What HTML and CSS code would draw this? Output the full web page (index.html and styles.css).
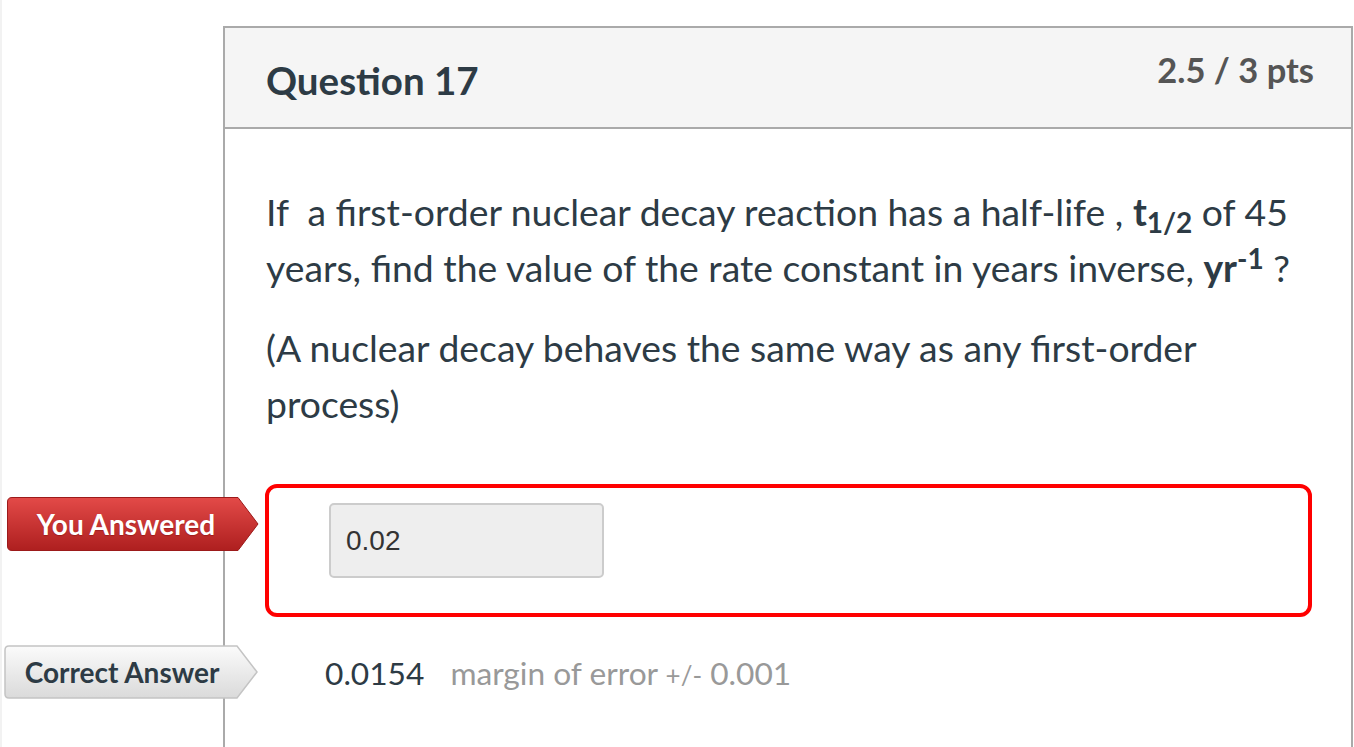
FILE: index.html
```html
<!DOCTYPE html>
<html lang="en">
<head>
<meta charset="utf-8">
<title>Question 17</title>
<link rel="stylesheet" href="styles.css">
</head>
<body>
<div class="page">
  <div class="question">
    <div class="q-header">
      <h2 class="q-title">Question 17</h2>
      <div class="q-points">2.5 / 3 pts</div>
    </div>
    <div class="q-body">
      <div class="q-text">
        <p class="p1">If&nbsp; a first-order nuclear decay reaction has a half-life , <strong>t<sub>1/2</sub></strong> of 45 years, find the value of the rate constant in years inverse, <strong>yr<sup>-1</sup></strong> ?</p>
        <p class="p2">(A nuclear decay behaves the same way as any first-order process)</p>
      </div>
      <div class="answers">
        <div class="answer-box">
          <div class="tag tag-wrong">
            <svg class="tag-shape" viewBox="0 0 252 54" width="252" height="54" aria-hidden="true">
              <defs>
                <linearGradient id="gRed" x1="0" y1="0" x2="0" y2="1">
                  <stop offset="0" stop-color="#e34a48"/>
                  <stop offset="1" stop-color="#ae1f1f"/>
                </linearGradient>
              </defs>
              <path d="M5,0.5 H231 L251,27 L231,53.5 H5 Q0.5,53.5 0.5,49 V5 Q0.5,0.5 5,0.5 Z" fill="url(#gRed)" stroke="#9c1a1a" stroke-width="1"/>
            </svg>
            <span class="tag-label">You Answered</span>
          </div>
          <div class="answer-input">0.02</div>
        </div>
        <div class="correct-row">
          <div class="tag tag-correct">
            <svg class="tag-shape" viewBox="0 0 254 54" width="254" height="54" aria-hidden="true">
              <defs>
                <linearGradient id="gGray" x1="0" y1="0" x2="0" y2="1">
                  <stop offset="0" stop-color="#fbfbfb"/>
                  <stop offset="1" stop-color="#dadada"/>
                </linearGradient>
              </defs>
              <path d="M5,1 H233 L253,27 L233,53 H5 Q1,53 1,49 V5 Q1,1 5,1 Z" fill="url(#gGray)" stroke="#c4c4c4" stroke-width="1.5"/>
            </svg>
            <span class="tag-label">Correct Answer</span>
          </div>
          <span class="correct-value">0.0154</span>
          <span class="margin">margin of error <span class="pm">+/-</span> 0.001</span>
        </div>
      </div>
    </div>
  </div>
</div>
</body>
</html>
```
FILE: styles.css
```css
html, body {
  margin: 0;
  padding: 0;
  background: #fff;
}
body {
  font-family: Lato, "Open Sans", sans-serif;
  color: #2d3b45;
  overflow: hidden;
}
.page {
  border-left: 2px solid #f2f2f2;
  padding: 26px 1px 0 221px;
  min-height: 747px;
  box-sizing: border-box;
}
.question {
  border: 2px solid #aaaaaa;
  border-bottom: none;
  min-height: 760px;
}
.q-header {
  display: flex;
  justify-content: space-between;
  align-items: flex-start;
  height: 101px;
  box-sizing: border-box;
  padding: 21px 37px 0 41px;
  background: #f5f5f5;
  border-bottom: 2px solid #aaaaaa;
}
.q-title {
  margin: 8px 0 0;
  font-size: 38.5px;
  line-height: 1.2;
  font-weight: 700;
  color: #2d3b45;
}
.q-points {
  font-size: 34.5px;
  line-height: 1.2;
  font-weight: 700;
  color: #555555;
}
.q-body {
  padding: 55px 39px 0 41px;
}
.q-text p {
  margin: 0 0 25px;
  font-size: 37.33px;
  line-height: 55.5px;
}
.q-text p:last-child {
  margin-bottom: 0;
}
.q-text strong {
  font-weight: 700;
}
.q-text sub,
.q-text sup {
  font-size: 0.75em;
  line-height: 0;
  font-weight: 700;
}
.q-text sub {
  vertical-align: -7px;
}
.q-text sup {
  vertical-align: 13px;
}
.answers {
  padding-top: 53px;
}
.answer-box {
  position: relative;
  margin-left: -1px;
  border: 4px solid #ff0000;
  border-radius: 12px;
  padding: 15px 0 35px 60px;
}
.answer-input {
  display: flex;
  align-items: center;
  width: 275px;
  height: 75px;
  box-sizing: border-box;
  padding-left: 15px;
  background: #eeeeee;
  border: 2px solid #cccccc;
  border-radius: 5px;
  font-family: "Liberation Sans", Arial, sans-serif;
  font-size: 28px;
  color: #333333;
}
.tag {
  position: absolute;
  display: flex;
  align-items: center;
  height: 54px;
}
.tag-shape {
  position: absolute;
  left: 0;
  top: 0;
}
.tag-label {
  position: relative;
  font-size: 28px;
  font-weight: 700;
  line-height: 1;
}
.tag-wrong {
  left: -262px;
  top: 9px;
  width: 232px;
  justify-content: center;
}
.tag-wrong .tag-label {
  color: #ffffff;
  margin-left: 6px;
  text-shadow: 0 1px 1px rgba(100, 0, 0, 0.35);
}
.tag-correct {
  left: -262px;
  top: -1px;
  width: 234px;
  justify-content: center;
}
.tag-correct .tag-label {
  color: #2d3b45;
  margin-left: 2px;
}
.correct-row {
  position: relative;
  display: flex;
  align-items: center;
  height: 53px;
  margin-top: 29px;
  padding-left: 59px;
  font-size: 31.7px;
}
.correct-value {
  color: #2d3b45;
}
.margin {
  margin-left: 26px;
  color: #999999;
}
.pm {
  font-size: 0.82em;
}
```
